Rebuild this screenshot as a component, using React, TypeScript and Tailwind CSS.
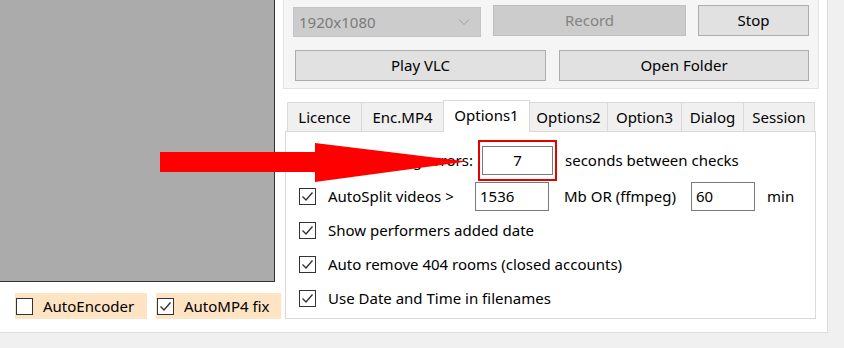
import type { ReactNode } from "react";

const FONT = { fontFamily: '"Noto Sans", "Segoe UI", Arial, sans-serif' };

function CheckBox({ checked }: { checked?: boolean }) {
  return (
    <span className="flex h-[17px] w-[17px] shrink-0 items-center justify-center border border-[#333333] bg-white">
      {checked && (
        <svg aria-hidden viewBox="0 0 15 15" className="h-[15px] w-[15px]" fill="none">
          <path d="M2.5 7.5L6 11l6.5-7.5" stroke="#333333" strokeWidth="1.4" />
        </svg>
      )}
    </span>
  );
}

function WinButton({
  children,
  disabled,
  className,
}: {
  children: ReactNode;
  disabled?: boolean;
  className: string;
}) {
  return (
    <div
      className={
        "flex h-[31px] items-center justify-center border text-[15px] " +
        (disabled
          ? "border-[#bfbfbf] bg-[#cccccc] text-[#838383] "
          : "border-[#adadad] bg-[#e1e1e1] text-black ") +
        className
      }
    >
      {children}
    </div>
  );
}

function Tab({ label, width, active }: { label: string; width: string; active?: boolean }) {
  if (active) {
    return (
      <div
        className={
          "relative z-10 -mb-px flex h-[32px] items-start justify-center border border-b-0 border-[#d9d9d9] bg-white pt-[3px] text-[15px] " +
          width
        }
      >
        {label}
      </div>
    );
  }
  return (
    <div
      className={
        "-ml-px flex h-[29px] items-center justify-center border border-b-0 border-[#d9d9d9] bg-[#f0f0f0] text-[15px] first:ml-0 " +
        width
      }
    >
      {label}
    </div>
  );
}

function TextBox({ value, className }: { value: string; className: string }) {
  return (
    <div className={"flex h-[29px] items-center border border-[#7a7a7a] bg-white text-[15px] " + className}>
      {value}
    </div>
  );
}

function OptionRow({ label }: { label: string }) {
  return (
    <div className="flex h-[34px] items-center pl-[13px]">
      <CheckBox checked />
      <span className="ml-[12px] text-[15px]">{label}</span>
    </div>
  );
}

export default function App() {
  return (
    <div className="relative h-[348px] w-[844px] overflow-hidden bg-[#f0f0f0] text-black" style={FONT}>
      <div className="flex h-[333px] w-[828px] border-b border-r border-[#dcdcdc] bg-white">
        {/* preview + bottom toggles */}
        <div className="w-[283px] shrink-0">
          <div className="h-[282px] w-[275px] border-b border-r border-[#333333] bg-[#ababab]" />
          <div className="mt-[11px] flex">
            <label className="ml-[15px] flex h-[26px] w-[132px] items-center bg-[#ffe4c4] pl-px">
              <CheckBox />
              <span className="ml-[10px] text-[15px]">AutoEncoder</span>
            </label>
            <label className="ml-[9px] flex h-[26px] w-[125px] items-center bg-[#ffe4c4] pl-px">
              <CheckBox checked />
              <span className="ml-[10px] text-[15px]">AutoMP4 fix</span>
            </label>
          </div>
        </div>

        {/* controls */}
        <div className="w-[536px] shrink-0">
          <div className="h-[89px] border-x border-b border-[#e3e3e3] bg-[#f5f5f5]">
            <div className="flex items-start pt-[5px]">
              <div className="ml-[9px] mt-[2px] flex h-[30px] w-[188px] items-center justify-between border border-[#c4c4c4] bg-[#cccccc] pl-[5px] pr-[10px] text-[15px] text-[#7a7a7a]">
                <span>1920x1080</span>
                <svg aria-hidden viewBox="0 0 12 8" className="h-[8px] w-[12px]" fill="none">
                  <path d="M1 1.5l5 5 5-5" stroke="#9a9a9a" strokeWidth="1" />
                </svg>
              </div>
              <WinButton disabled className="ml-[12px] w-[193px]">
                Record
              </WinButton>
              <WinButton className="ml-[12px] w-[111px]">Stop</WinButton>
            </div>
            <div className="mt-[13px] flex">
              <WinButton className="ml-[11px] w-[251px]">Play VLC</WinButton>
              <WinButton className="ml-[13px] w-[250px]">Open Folder</WinButton>
            </div>
          </div>

          <div className="ml-[4px] mt-[11px] flex h-[31px] items-end">
            <Tab label="Licence" width="w-[75px]" />
            <Tab label="Enc.MP4" width="w-[83px]" />
            <Tab label="Options1" width="w-[87px] -ml-px" active />
            <Tab label="Options2" width="w-[79px]" />
            <Tab label="Option3" width="w-[75px]" />
            <Tab label="Dialog" width="w-[63px]" />
            <Tab label="Session" width="w-[72px]" />
          </div>

          <div className="ml-[2px] h-[188px] w-[531px] border border-[#d9d9d9] bg-white">
            <div className="mt-[14px] flex items-center">
              <span className="w-[188px] pr-[1px] text-right text-[15px]">Delay for checking errors:</span>
              <div className="relative ml-[8px]">
                <TextBox value="7" className="w-[71px] justify-center" />
                <div className="pointer-events-none absolute -bottom-[6px] -left-[4px] -right-[4px] -top-[6px] border-2 border-[#e60000]" />
              </div>
              <span className="ml-[12px] text-[15px]">seconds between checks</span>
            </div>

            <div className="mt-[7px] flex h-[29px] items-center pl-[13px]">
              <div className="flex w-[176px] items-center">
                <CheckBox checked />
                <span className="ml-[12px] text-[15px]">AutoSplit videos &gt;</span>
              </div>
              <TextBox value="1536" className="w-[74px] pl-[4px]" />
              <span className="ml-[15px] w-[127px] text-[15px]">Mb OR (ffmpeg)</span>
              <TextBox value="60" className="w-[64px] pl-[4px]" />
              <span className="ml-[12px] text-[15px]">min</span>
            </div>

            <div className="mt-[2px]">
              <OptionRow label="Show performers added date" />
              <OptionRow label="Auto remove 404 rooms (closed accounts)" />
              <OptionRow label="Use Date and Time in filenames" />
            </div>
          </div>
        </div>
      </div>

      {/* red annotation arrow */}
      <svg
        aria-hidden
        viewBox="0 0 307 39"
        className="pointer-events-none absolute left-[160px] top-[143px] h-[39px] w-[307px]"
      >
        <polygon points="0,9 155,9 155,0 307,18.5 155,39 155,29 0,29" fill="#ff0000" />
      </svg>
    </div>
  );
}
